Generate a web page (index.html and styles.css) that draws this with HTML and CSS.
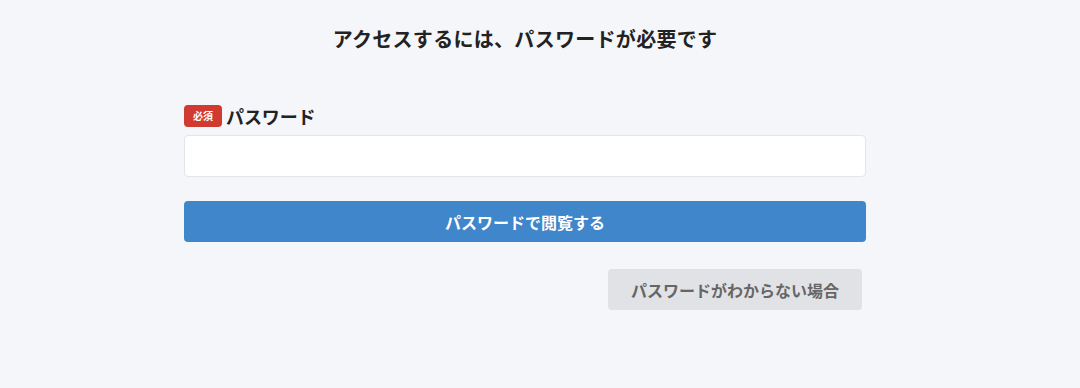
FILE: index.html
```html
<!DOCTYPE html>
<html lang="ja">
<head>
<meta charset="utf-8">
<title>パスワード</title>
<link rel="stylesheet" href="styles.css">
</head>
<body>
<main class="wrap">
  <h1 class="title">アクセスするには、パスワードが必要です</h1>
  <form class="form">
    <div class="label-row">
      <span class="badge">必須</span>
      <label class="label" for="pw">パスワード</label>
    </div>
    <input class="input" id="pw" type="password">
    <button class="btn-primary" type="button">パスワードで閲覧する</button>
    <div class="sub-row">
      <button class="btn-sub" type="button">パスワードがわからない場合</button>
    </div>
  </form>
</main>
</body>
</html>
```
FILE: styles.css
```css
html, body {
  margin: 0;
  padding: 0;
  background: #f5f6fa;
}
body {
  font-family: "Noto Sans CJK JP", "Noto Sans", sans-serif;
  color: #222;
  padding-top: 24px;
}
.wrap {
  width: 682px;
  margin-left: 184px;
}
.title {
  margin: 0;
  font-size: 20px;
  line-height: 30px;
  font-weight: 700;
  text-align: center;
  letter-spacing: 0.3px;
  color: #222;
}
.form {
  margin-top: 51px;
  display: flex;
  flex-direction: column;
}
.label-row {
  display: flex;
  align-items: center;
  height: 22px;
  gap: 4px;
}
.badge {
  display: inline-flex;
  align-items: center;
  justify-content: center;
  width: 38px;
  height: 22px;
  border-radius: 4px;
  background: #d13a30;
  color: #fff;
  font-size: 10px;
  font-weight: 700;
  line-height: 1;
}
.label {
  font-size: 18px;
  font-weight: 700;
  line-height: 22px;
  letter-spacing: -0.1px;
  color: #222;
}
.input {
  margin-top: 8px;
  box-sizing: border-box;
  height: 42px;
  width: 100%;
  background: #fff;
  border: 1px solid #e3e5ea;
  border-radius: 4px;
  outline: none;
  padding: 0 12px;
  font-size: 16px;
}
.btn-primary {
  margin-top: 24px;
  height: 41px;
  width: 100%;
  border: none;
  border-radius: 4px;
  background: #3f86ca;
  color: #fff;
  font-family: inherit;
  font-size: 16px;
  font-weight: 700;
  cursor: pointer;
}
.sub-row {
  margin-top: 27px;
  display: flex;
  justify-content: flex-end;
  padding-right: 4px;
}
.btn-sub {
  height: 41px;
  width: 254px;
  border: none;
  border-radius: 4px;
  background: #e1e2e5;
  color: #666;
  font-family: inherit;
  font-size: 16px;
  font-weight: 700;
  cursor: pointer;
}
```
